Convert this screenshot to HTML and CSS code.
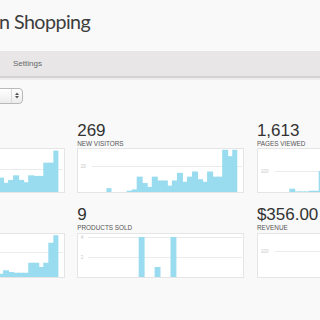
FILE: index.html
```html
<!DOCTYPE html>
<html lang="en">
<head>
    <meta charset="UTF-8">
    <meta name="viewport" content="width=device-width, initial-scale=1.0">
    <title>Shopping Dashboard</title>
    <link rel="stylesheet" href="styles.css">
</head>
<body>

<!-- Header -->
<header class="header">
    <h1 class="title">n Shopping</h1>
</header>

<nav class="nav">
    <ul>
        <li><a href="#">Settings</a></li>
    </ul>
</nav>

<!-- Dashboard -->
<section class="dashboard">
    <div class="toolbar">
        <div class="select">
            <span class="select-value"></span>
            <span class="select-arrows">
                <svg width="4" height="7" viewBox="0 0 4 7">
                    <polygon points="0,3 2,0.4 4,3" fill="#555"/>
                    <polygon points="0,4 2,6.6 4,4" fill="#555"/>
                </svg>
            </span>
        </div>
    </div>

    <div class="stats">
        <div class="stat">
            <div class="stat-value">1,326</div>
            <div class="stat-label">VISITS</div>
            <div class="chart" id="chartVisits"></div>
        </div>
        <div class="stat">
            <div class="stat-value">269</div>
            <div class="stat-label">NEW VISITORS</div>
            <div class="chart" id="chartNewVisitors"></div>
        </div>
        <div class="stat">
            <div class="stat-value">1,613</div>
            <div class="stat-label">PAGES VIEWED</div>
            <div class="chart" id="chartPages"></div>
        </div>
        <div class="stat">
            <div class="stat-value">7</div>
            <div class="stat-label">ORDERS</div>
            <div class="chart" id="chartOrders"></div>
        </div>
        <div class="stat">
            <div class="stat-value">9</div>
            <div class="stat-label">PRODUCTS SOLD</div>
            <div class="chart" id="chartProducts"></div>
        </div>
        <div class="stat">
            <div class="stat-value">$356.00</div>
            <div class="stat-label">REVENUE</div>
            <div class="chart" id="chartRevenue"></div>
        </div>
    </div>
</section>

<script>
    const charts = [
        { id: "chartVisits", start: 13.5, bar: 5.03, gridStart: 13, scale: 0.575, grid: [40],
          values: [8, 12, 10, 6, 14, 18, 12, 9, 15, 20, 11, 16, 22, 13, 10, 19, 17, 25, 16, 21, 29, 21, 17, 29, 28, 28, 51, 51, 72] },
        { id: "chartNewVisitors", start: 13.4, bar: 5.03, gridStart: 13.7, scale: 1.28, grid: [20],
          values: [0, 0, 0, 3, 0, 0, 0, 1, 2, 12, 7, 4, 12, 9, 9, 5, 9, 15, 8, 12, 16, 10, 8, 16, 12, 12, 33, 28, 33] },
        { id: "chartPages", start: 16.6, bar: 4.9, gridStart: 17.3, scale: 0.206, grid: [100],
          values: [0, 0, 0, 16, 3, 3, 3, 6, 6, 102, 88, 64, 95, 72, 110, 58, 80, 66, 92, 120, 75, 60, 98, 85, 70, 112, 134, 96, 0] },
        { id: "chartOrders", start: 13.5, bar: 5.03, gridStart: 17.3, scale: 0.25, grid: [100],
          values: [20, 10, 33, 15, 27, 0, 12, 40, 18, 25, 8, 30, 14, 22, 0, 17, 26, 13, 27, 20, 17, 17, 17, 57, 57, 40, 57, 137, 167] },
        { id: "chartProducts", start: 13, bar: 5.3, width: 5.9, gridStart: 10, scale: 10, grid: [4, 2],
          values: [0, 0, 0, 0, 0, 0, 0, 0, 0, 4, 0, 0, 1, 0, 0, 4] },
        { id: "chartRevenue", start: 16.6, bar: 4.9, gridStart: 17.3, scale: 0.256, grid: [100],
          values: [0, 0, 0, 0, 0, 0, 0, 0, 0, 0, 0, 158, 0, 0, 40, 0, 0, 158] }
    ];

    function drawChart(chart) {
        const w = 165, h = 43;
        let svg = `<svg width="${w}" height="${h}" viewBox="0 0 ${w} ${h}">`;

        chart.grid.forEach(v => {
            const y = Math.round(h - v * chart.scale) + 0.5;
            svg += `<text class="grid-label" x="2.7" y="${y + 1.7}">${v}</text>`;
            svg += `<line class="grid-line" x1="${chart.gridStart}" x2="${w - 1}" y1="${y}" y2="${y}"/>`;
        });

        chart.values.forEach((v, i) => {
            const bh = v * chart.scale;
            if (bh > 0) {
                // neighbouring bars overlap a little so no seam shows between them
                const next = chart.values[i + 1] > 0;
                const bw = chart.width || chart.bar + (next ? 1 : 0);
                svg += `<rect class="bar" x="${chart.start + i * chart.bar}" y="${h - bh}" width="${bw}" height="${bh}"/>`;
            }
        });

        svg += `</svg>`;
        document.getElementById(chart.id).innerHTML = svg;
    }

    charts.forEach(drawChart);
</script>

</body>
</html>
```

FILE: styles.css
```css
html, body {
    overflow: hidden;
}

body {
    font-family: 'Liberation Sans', Arial, sans-serif;
    margin: 0;
    padding: 0;
    background-color: #f9f9f9;
    color: #333;
}

.header {
    padding: 10px 0 17px;
}

.header .title {
    margin: 0 0 0 -1px;
    font-family: 'Lato', 'Open Sans', sans-serif;
    font-weight: 400;
    font-size: 19.7px;
    letter-spacing: -0.55px;
    line-height: 24px;
    color: #3d3d3d;
}

.nav {
    height: 25px;
    background-color: #e8e6e7;
    border-bottom: 2px solid #d3d1d2;
    box-shadow: 0 2px 0 #eeeeee;
}

.nav ul {
    list-style: none;
    margin: 0;
    padding: 0 0 0 13px;
    display: flex;
}

.nav ul li a {
    text-decoration: none;
    color: #666;
    font-size: 8px;
    line-height: 25px;
}

.dashboard {
    padding-top: 9.5px;
    overflow: hidden;
}

.select {
    display: flex;
    width: 40px;
    height: 16.5px;
    margin-left: -17px;
    box-sizing: border-box;
    border: 1px solid #b9b9b9;
    border-radius: 4px;
    background: linear-gradient(#ffffff, #ececec);
}

.select-value {
    flex: 1;
}

.select-arrows {
    width: 10px;
    border-left: 1px solid #dcdcdc;
    display: flex;
    align-items: center;
    justify-content: center;
}

.select-arrows svg {
    display: block;
}

.stats {
    display: grid;
    grid-template-columns: repeat(3, 167px);
    column-gap: 12.7px;
    row-gap: 12px;
    margin: 16.9px 0 0 -102.5px;
}

.stat-value {
    font-size: 17px;
    line-height: 19px;
    color: #333;
}

.stat-label {
    font-size: 6.4px;
    line-height: 8px;
    color: #555;
    margin-bottom: 0.5px;
}

.chart {
    height: 45px;
    box-sizing: border-box;
    border: 1px solid #e5e5e5;
    background-color: #fff;
}

.chart svg {
    display: block;
}

.grid-line {
    stroke: #ebebeb;
    stroke-width: 1;
}

.grid-label {
    fill: #c8c8c8;
    font-size: 4.7px;
    font-family: 'Liberation Sans', Arial, sans-serif;
}

.bar {
    fill: #99dcef;
}
```
